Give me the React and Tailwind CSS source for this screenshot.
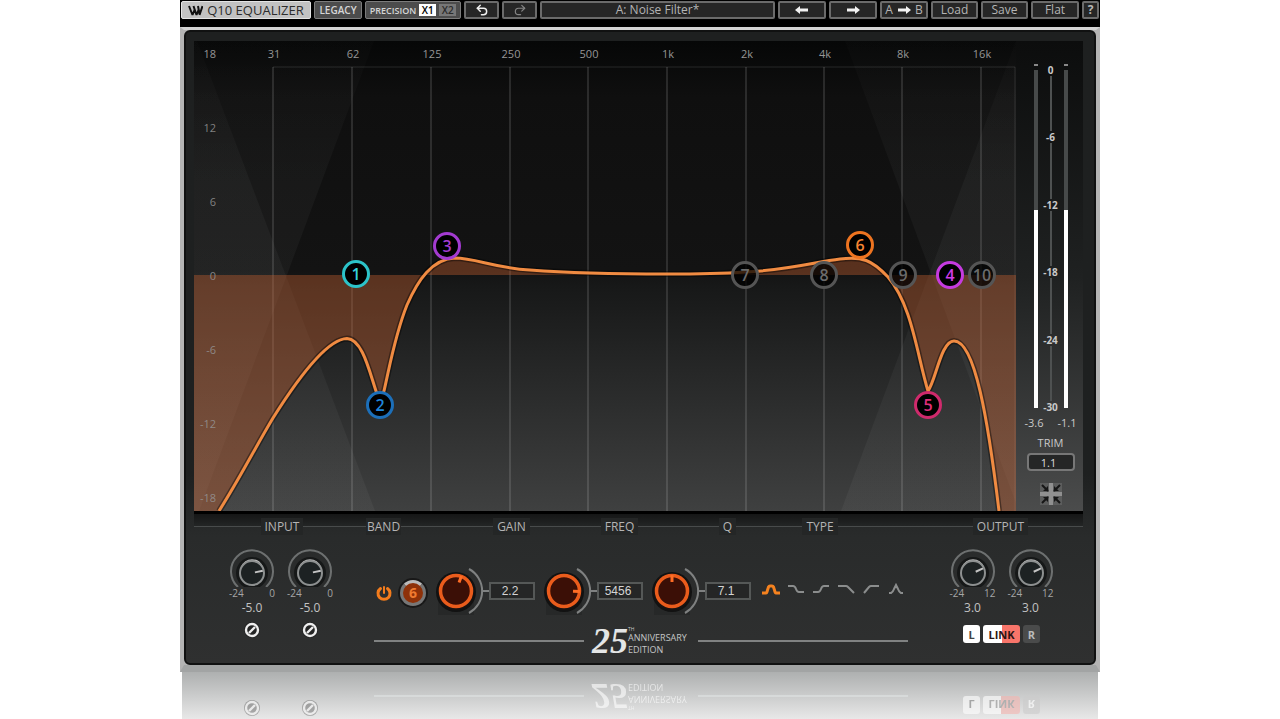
import React, { useState } from 'react';
import { Undo2, Redo2 } from 'lucide-react';

const FREQS = [
  { x: 79, label: '31' },
  { x: 158, label: '62' },
  { x: 237, label: '125' },
  { x: 316, label: '250' },
  { x: 394, label: '500' },
  { x: 473, label: '1k' },
  { x: 552, label: '2k' },
  { x: 630, label: '4k' },
  { x: 708, label: '8k' },
  { x: 787, label: '16k' },
];

const LEVELS = [
  { y: 87, label: '12' },
  { y: 161, label: '6' },
  { y: 235, label: '0' },
  { y: 309, label: '-6' },
  { y: 383, label: '-12' },
  { y: 457, label: '-18' },
];

const BANDS = [
  { id: 7, x: 551, y: 234, color: 'border-[#555] text-[#6b6b6b] bg-black/75' },
  { id: 8, x: 630, y: 234, color: 'border-[#555] text-[#6b6b6b] bg-black/75' },
  { id: 9, x: 709, y: 234, color: 'border-[#555] text-[#6b6b6b] bg-black/75' },
  { id: 10, x: 788, y: 234, color: 'border-[#555] text-[#6b6b6b] bg-black/75' },
  { id: 1, x: 162, y: 233, color: 'border-[#2cc3c9] text-[#35d5dc] bg-black' },
  { id: 2, x: 186, y: 364, color: 'border-[#1c6fb9] text-[#1f86dd] bg-black' },
  { id: 3, x: 253, y: 205, color: 'border-[#a33bd0] text-[#a33bd0] bg-black' },
  { id: 4, x: 756, y: 234, color: 'border-[#c63be0] text-[#d03ce8] bg-black' },
  { id: 5, x: 734, y: 364, color: 'border-[#cf2a6c] text-[#e02f7c] bg-black' },
  { id: 6, x: 666, y: 204, color: 'border-[#ee7420] text-[#f58432] bg-black' },
];

const CURVE =
  'C46 437 61 407 79 377 C96 350 131 298 153 297.5 C168 298 175 329 182 350 L186 356 L190 350 C196 324 201 294 213 264 C224 239 238 218 261 217 C281 217 301 227 336 229 C376 232 426 233 473 233 C506 233 536 232 551 231 C596 229 621 221 646 218 C668 215 678 219 694 236 C718 264 723 314 734 350 C742 339 747 300 760 300 C781 300 794 379 805 470';

const TYPES = [
  { name: 'Bell', d: 'M0 10h4q1 0 1.500-3l1-3q.5-1 1.500-1h2q1 0 1.500 1l1 3q.5 3 1.500 3h4' },
  { name: 'Low shelf', d: 'M1 3h5q2 0 3 3t3 3h5' },
  { name: 'High shelf', d: 'M1 9h5q2 0 3-3t3-3h5' },
  { name: 'High cut', d: 'M1 3h8q1 0 2 1l6 6' },
  { name: 'Low cut', d: 'M2 10l5-6q1-1 2-1h8' },
  { name: 'Notch', d: 'M2 10h2q2-1 3-4l2-4 2 4q1 3 3 4h2' },
];

const BarButton = ({ label, className = '', children }) => (
  <button
    aria-label={label}
    className={`h-[18px] flex items-center justify-center rounded-xs border-2 border-[#6b6b6b] bg-[#262626] text-[12px] leading-none text-[#b4b4b4] ${className}`}
  >
    {children}
  </button>
);

const Arrow = ({ left }) => (
  <svg width="14" height="8" viewBox="0 0 14 8" className={left ? '' : 'rotate-180'} fill="#f2f2f2">
    <path d="M0 4l5-4v2.500h8v3H5V8z" />
  </svg>
);

const Toolbar = () => (
  <header className="flex gap-[3px] bg-black px-px pt-px pb-2">
    <h1 className="h-[18px] w-[130px] flex items-center justify-center gap-1 rounded-xs bg-[#c2c2c2] border border-[#e4e4e4] text-[13px] leading-none text-[#2c2c2c]">
      <svg width="15" height="11" viewBox="0 0 15 11" fill="none" stroke="#111" strokeWidth="2">
        <path d="M1 1l3.500 9M5.500 1l3 9M10 1l1.500 8M4.500 10l2-5M8.500 10l2-5M11.500 10l3-9" />
      </svg>
      Q10 EQUALIZER
    </h1>
    <button className="h-[18px] w-[48px] rounded-xs border border-[#7c7c7c] bg-[#4c4c4c] text-[10px] leading-none font-semibold text-[#d6d6d6]">LEGACY</button>
    <div className="h-[18px] w-[96px] flex items-center justify-center gap-[3px] rounded-xs border border-[#7c7c7c] bg-[#4c4c4c] text-[10px] leading-none font-semibold text-[#d6d6d6]">
      <span className="text-[9px]">PRECISION</span>
      <button className="h-3 w-[17px] bg-white text-black">X1</button>
      <button className="h-3 w-[17px] bg-[#777] text-[#2b2b2b]">X2</button>
    </div>
    <BarButton label="Undo" className="w-[35px]"><Undo2 size={14} strokeWidth={2.5} color="#f0f0f0" /></BarButton>
    <BarButton label="Redo" className="w-[35px]"><Redo2 size={14} strokeWidth={2} color="#858585" /></BarButton>
    <BarButton className="flex-1">A: Noise Filter*</BarButton>
    <BarButton label="Previous preset" className="w-[48px]"><Arrow left /></BarButton>
    <BarButton label="Next preset" className="w-[48px]"><Arrow /></BarButton>
    <BarButton label="Copy A to B" className="w-[48px] gap-1"><span>A</span><Arrow /><span>B</span></BarButton>
    <BarButton className="w-[47px]">Load</BarButton>
    <BarButton className="w-[47px]">Save</BarButton>
    <BarButton className="w-[48px] text-[10px]">Flat</BarButton>
    <BarButton label="Help" className="w-[17px] font-bold">?</BarButton>
  </header>
);

const Graph = ({ band, onSelect }) => (
  <div className="relative min-w-0 flex-1">
    <svg viewBox="0 0 822 470" className="block w-full" fontSize="11" fill="#969696">
      <defs>
        <linearGradient id="screen" x1="0" y1="0" x2="0" y2="1">
          <stop offset="0" stopColor="#060707" />
          <stop offset="0.12" stopColor="#0f0f0f" />
          <stop offset="0.49" stopColor="#131313" />
          <stop offset="0.52" stopColor="#171818" />
          <stop offset="1" stopColor="#3f4040" />
        </linearGradient>
        <linearGradient id="beam" x1="0" y1="0" x2="0" y2="1">
          <stop offset="0" stopColor="#fff" stopOpacity="0.01" />
          <stop offset="0.3" stopColor="#f0fffa" stopOpacity="0.035" />
          <stop offset="1" stopColor="#fff" stopOpacity="0.04" />
        </linearGradient>
      </defs>
      <rect width="822" height="470" fill="url(#screen)" />
      <path d="M0 0h180L5 470H0z" fill="url(#beam)" />
      <path d="M0 0h3l178 470H0z" fill="url(#beam)" />
      <path d="M822 0H651l171 462z" fill="url(#beam)" />
      <path d="M822 0v470H647z" fill="url(#beam)" />
      <path d="M79 26H821V470" fill="none" stroke="#fff" strokeOpacity="0.12" />
      <path d={FREQS.map((f) => `M${f.x} 26v444`).join('')} stroke="#fff" strokeOpacity="0.12" strokeWidth="2" />
      <path d={`M0 234V470H25 ${CURVE} H822V234z`} fill="#c4602f" fillOpacity="0.4" />
      <path d={`M25 470 ${CURVE}`} fill="none" stroke="#000" strokeOpacity="0.4" strokeWidth="6" />
      <path d={`M25 470 ${CURVE}`} fill="none" stroke="#f08b42" strokeWidth="3" />
      <text x="22" y="17" textAnchor="end">18</text>
      {FREQS.map((f) => (
        <text key={f.label} x={f.x + 1} y="17" textAnchor="middle">{f.label}</text>
      ))}
      {LEVELS.map((l) => (
        <text key={l.label} x="22" y={l.y + 4} textAnchor="end" fillOpacity="0.85">{l.label}</text>
      ))}
    </svg>
    {BANDS.map((b) => (
      <button
        key={b.id}
        aria-pressed={b.id === band}
        onClick={() => onSelect(b.id)}
        className={`absolute size-7 -translate-1/2 rounded-full border-3 text-[16px] leading-none font-semibold ${b.color}`}
        style={{ left: `${(b.x / 822) * 100}%`, top: `${(b.y / 470) * 100}%` }}
      >
        {b.id}
      </button>
    ))}
  </div>
);

const MeterBar = () => (
  <div className="flex w-1 flex-col">
    <div className="h-[2px] bg-[#888]" />
    <div className="mt-1 h-[140px] bg-[#474a4a]" />
    <div className="flex-1 bg-white" />
  </div>
);

const Meter = () => (
  <aside className="flex w-[67px] flex-col items-center bg-linear-to-b from-[#0c0d0d] via-[#1f2121] to-[#4b4c4c] pt-[23px] pl-[2px] text-[11px] leading-3 text-[#c9c9c9]">
    <div className="flex h-[349px] w-[34px] justify-between">
      <div className="flex pb-[5px]"><MeterBar /></div>
      <div className="flex flex-1 flex-col items-center font-bold">
        {['0', '-6', '-12', '-18', '-24', '-30'].map((mark, i) => (
          <React.Fragment key={mark}>
            {i > 0 && <div className="w-[2px] flex-1 bg-[#4e5151]" />}
            <span className="text-[10px]">{mark}</span>
          </React.Fragment>
        ))}
      </div>
      <div className="flex pb-[5px]"><MeterBar /></div>
    </div>
    <div className="mt-1 flex w-[52px] justify-between"><span>-3.6</span><span>-1.1</span></div>
    <label htmlFor="trim" className="mt-2">TRIM</label>
    <input id="trim" defaultValue="1.1" className="mt-1 h-[18px] w-12 rounded-sm border-2 border-[#777] bg-[#252626] pr-1 text-center text-[11px] text-[#ddd]" />
    <button aria-label="Collapse" className="mt-3">
      <svg width="22" height="22" viewBox="0 0 22 22">
        <path d="M0 0h22v22H0z" fill="#5c5d5d" />
        <path d="M11 0v22M0 11h22" stroke="#909090" strokeWidth="4" />
        <path d="M2 2l6 6M20 2l-6 6M2 20l6-6M20 20l-6-6" stroke="#161616" strokeWidth="2" />
        <path d="M8 3v5H3zM14 3v5h5zM8 19v-5H3zM14 19v-5h5z" fill="#161616" />
      </svg>
    </button>
  </aside>
);

const SmallKnob = ({ name, value, max, angle }) => (
  <label className="relative flex w-[58px] flex-col items-center">
    <svg width="46" height="38" viewBox="0 0 46 38" fill="none">
      <path d="M9 38A21 21 0 1 1 37 38" stroke="#6d7070" strokeWidth="2" />
      <circle cx="23" cy="24" r="16" fill="#161818" />
      <path d="M12 18a12 13 0 0 1 22 0z" fill="#b8b8b8" />
      <circle cx="23" cy="24" r="12" fill="#1d2223" stroke="#8d9090" strokeWidth="2" />
      <path d="M26 24h8" stroke="#c4c4c4" strokeWidth="2" transform={`rotate(${angle} 23 24)`} />
    </svg>
    <span className="flex w-[46px] justify-between text-[10px] leading-3 text-[#a5a5a5]"><span>-24</span><span>{max}</span></span>
    <span className="mt-[2px] text-[12px] leading-[14px] text-[#c2c2c2]">{value}</span>
    <input type="range" aria-label={name} min="-24" max={max} step="0.1" defaultValue={value} className="absolute inset-0 size-full cursor-pointer opacity-0" />
  </label>
);

const PhaseIcon = () => (
  <svg width="16" height="16" viewBox="0 0 16 16" fill="none">
    <circle cx="8" cy="8" r="8" fill="#111" fillOpacity="0.35" />
    <circle cx="8" cy="8" r="6" stroke="#eee" strokeWidth="2.400" />
    <path d="M5 11l6-6" stroke="#eee" strokeWidth="2.400" />
  </svg>
);

const BandKnob = ({ name, value, angle }) => (
  <div className="flex w-[108px] items-center">
    <label className="relative">
      <svg width="53" height="52" viewBox="0 0 53 52" fill="none">
        <path d="M2 30h36v20H2z" fill="#000" fillOpacity="0.12" />
        <circle cx="20" cy="27" r="20" fill="#121212" />
        <path d="M7 17a17 17 0 0 1 26 0z" fill="#a8a8a8" />
        <circle cx="20" cy="27" r="18" fill="#1a1210" />
        <circle cx="20" cy="26" r="15.500" fill="#3b0f06" stroke="#ea5c1c" strokeWidth="3.500" />
        <path d="M20 17v-7" stroke="#ff6d25" strokeWidth="3" transform={`rotate(${angle} 20 26)`} />
        <path d="M33 4A25 25 0 0 1 33 48" stroke="#7f8181" strokeWidth="2" />
        <path d="M46 26h7" stroke="#7f8181" strokeWidth="2" />
      </svg>
      <input type="range" aria-label={`${name} knob`} className="absolute inset-0 size-full cursor-pointer opacity-0" />
    </label>
    <input aria-label={name} defaultValue={value} className="h-[18px] w-[46px] border-2 border-[#555857] bg-[#252626] pr-1 text-center font-['Liberation_Sans',sans-serif] text-[12px] text-[#d4d4d4]" />
  </div>
);

const Anniversary = () => (
  <div className="mx-2 flex items-center gap-2">
    <div className="h-[2px] flex-1 bg-[#808282]" />
    <div className="flex h-8 w-[98px] items-center">
      <span className="font-['Liberation_Serif',serif] text-[36px] leading-8 font-bold text-[#e4e6e6] italic">25</span>
      <div className="flex flex-col text-[9px] leading-3 text-[#c4c6c6]">
        <span className="text-[5px] leading-[6px]">TH</span>
        <span>ANNIVERSARY</span>
        <span>EDITION</span>
      </div>
    </div>
    <div className="h-[2px] flex-1 bg-[#808282]" />
  </div>
);

const chip = 'flex h-[18px] items-center justify-center rounded-[3px] text-[11px] leading-none font-bold';

const Controls = () => {
  const [type, setType] = useState('Bell');

  return (
    <section className="text-[#b4b4b4]">
      <div className="relative h-[27px] border-t-3 border-black text-[12px] leading-6">
        <div className="absolute inset-x-0 top-0 h-[13px] border-b border-[#484b4b] bg-linear-to-b from-[#151616] to-[#232525]" />
        <div className="relative flex pt-px">
          <span className="w-[172px] pl-1 text-center"><b className="bg-[#242626] px-1 font-normal">INPUT</b></span>
          <span className="w-[70px]"><b className="bg-[#242626] px-px font-normal">BAND</b></span>
          <span className="w-[108px] pl-[43px] text-center"><b className="bg-[#242626] px-1 font-normal">GAIN</b></span>
          <span className="w-[108px] pl-[43px] text-center"><b className="bg-[#242626] px-1 font-normal">FREQ</b></span>
          <span className="w-[108px] pl-[43px] text-center"><b className="bg-[#242626] px-1 font-normal">Q</b></span>
          <span className="w-[120px] text-center"><b className="bg-[#242626] px-1 font-normal">TYPE</b></span>
          <span className="ml-auto w-[165px] text-center"><b className="bg-[#242626] px-1 font-normal">OUTPUT</b></span>
        </div>
      </div>

      <div className="flex pt-[11px] pb-[6px]">
        <div className="flex w-[172px] justify-center pl-[2px]">
          {['Input left', 'Input right'].map((name) => (
            <div key={name} className="flex flex-col items-center">
              <SmallKnob name={name} value="-5.0" max="0" angle={-12} />
              <button aria-label={`${name} phase`} className="mt-[7px]"><PhaseIcon /></button>
            </div>
          ))}
        </div>

        <div className="flex-1 pt-4">
          <div className="flex items-center">
            <div className="flex w-[70px] items-center gap-2 pt-1 pl-[10px]">
              <button aria-label="Band on">
                <svg width="16" height="16" viewBox="0 0 16 16" fill="none" stroke="#f47c1c" strokeLinecap="round">
                  <path d="M4.500 3.500a6 6 0 1 0 7 0" strokeWidth="3" />
                  <path d="M8 2v6" strokeWidth="2" />
                </svg>
              </button>
              <button className="size-[26px] rounded-full border-3 border-[#777] border-t-[#bbb] bg-[#8e3109] text-[14px] leading-none font-bold text-[#f07a30] shadow-[0_0_0_2px_#181818]">6</button>
            </div>
            <BandKnob name="Gain" value="2.2" angle={20} />
            <BandKnob name="Frequency" value="5456" angle={92} />
            <BandKnob name="Q" value="7.1" angle={0} />
            <div className="flex gap-[7px] pb-1 pl-[2px]">
              {TYPES.map((t) => (
                <button key={t.name} aria-label={t.name} onClick={() => setType(t.name)} className={t.name === type ? 'text-[#f5821f]' : 'text-[#8b8d8d]'}>
                  <svg width="18" height="12" viewBox="0 0 18 12" fill="none" stroke="currentColor" strokeWidth={t.name === type ? 3 : 2}>
                    <path d={t.d} />
                  </svg>
                </button>
              ))}
            </div>
          </div>
          <div className="mt-2 pr-[2px]"><Anniversary /></div>
        </div>

        <div className="flex w-[165px] flex-col items-center pl-[2px]">
          <div className="flex">
            <SmallKnob name="Output left" value="3.0" max="12" angle={-25} />
            <SmallKnob name="Output right" value="3.0" max="12" angle={-25} />
          </div>
          <div className="mt-[10px] flex gap-[3px]">
            <button className={`${chip} w-[17px] bg-white text-[#444]`}>L</button>
            <button className={`${chip} w-[37px] bg-linear-to-r from-white from-50% to-[#f8756a] to-50% text-[10px] text-[#2b1515]`}>LINK</button>
            <button className={`${chip} w-[17px] bg-[#4a4b4b] text-[#bbb]`}>R</button>
          </div>
        </div>
      </div>
    </section>
  );
};

const Reflection = () => (
  <div aria-hidden="true" className="mx-[2px] flex h-[47px] items-start overflow-hidden bg-linear-to-b from-[#aeb0b0] to-[#e8e8e8] pt-2 pr-[15px] pl-3">
    <div className="flex w-[172px] justify-center pt-5 pl-[2px] opacity-80">
      <div className="flex w-[58px] justify-center"><PhaseIcon /></div>
      <div className="flex w-[58px] justify-center"><PhaseIcon /></div>
    </div>
    <div className="flex-1 -scale-y-100 pr-[2px] opacity-60 brightness-175"><Anniversary /></div>
    <div className="flex w-[165px] -scale-y-100 justify-center gap-[3px] pb-4 pl-[2px] opacity-60">
      <span className={`${chip} w-[17px] bg-white text-[#888]`}>L</span>
      <span className={`${chip} w-[37px] bg-linear-to-r from-white from-50% to-[#f5b5b0] to-50% text-[10px] text-[#999]`}>LINK</span>
      <span className={`${chip} w-[17px] bg-[#ccc] text-white`}>R</span>
    </div>
  </div>
);

const App = () => {
  const [band, setBand] = useState(6);

  return (
    <div className="min-h-screen bg-white font-['Open_Sans',sans-serif]">
      <main className="mx-auto w-full max-w-[920px]">
        <Toolbar />
        <div className="border-x-4 border-t-3 border-b-7 border-x-[#b4b4b4] border-t-[#d4d4d4] border-b-[#a2a4a4] bg-[#b4b4b4]">
          <div className="rounded-md border-2 border-[#101111] bg-linear-to-b from-[#1e2020] from-70% via-[#292b2b] via-80% to-[#2f3030] pt-[9px] pr-[11px] pl-2">
            <div className="flex">
              <Graph band={band} onSelect={setBand} />
              <Meter />
            </div>
            <Controls />
          </div>
        </div>
        <Reflection />
      </main>
    </div>
  );
};

export default App;
